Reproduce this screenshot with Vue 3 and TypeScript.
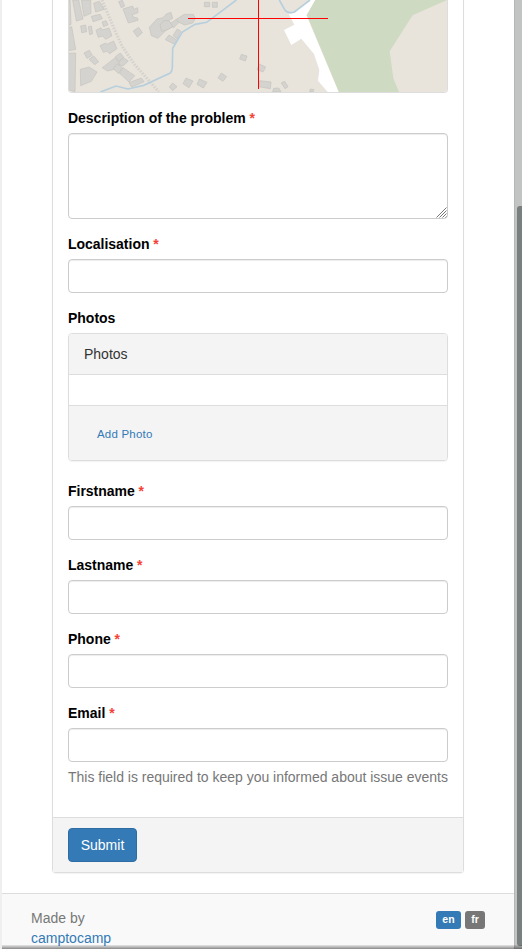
<script setup lang="ts">
interface Field {
  id: string
  label: string
  help?: string
}

const contactFields: Field[] = [
  { id: 'firstname', label: 'Firstname' },
  { id: 'lastname', label: 'Lastname' },
  { id: 'phone', label: 'Phone' },
  { id: 'email', label: 'Email', help: 'This field is required to keep you informed about issue events' },
]

// Building footprints, in thirds of a pixel
const buildings: string[] = [
  '49,0 54,0 57,73 50,76',
  '62,0 80,0 93,57 73,63',
  '88,0 116,0 117,40 96,49',
  '125,10 142,4 157,28 131,36',
  '118,49 144,43 151,56 123,65',
  '49,82 59,80 71,148 50,152',
  '86,78 101,75 104,95 89,98',
  '109,80 118,78 122,101 113,104',
  '150,66 162,62 168,74 155,80',
  '132,91 147,83 151,90 171,84 180,107 161,118 152,108 139,112',
  '144,137 161,129 165,133 185,123 195,146 173,161 165,154 154,157',
  '49,160 71,159 69,275 50,270',
  '96,159 112,151 121,166 105,175',
  '111,178 125,168 140,185 128,194',
  '85,208 111,201 135,216 118,244 86,257',
  '151,203 190,173 203,190 188,208 166,213',
  '190,170 205,159 215,172 200,184',
  '203,184 214,173 229,183 213,198 200,194',
  '184,206 195,191 211,203 200,221',
  '203,220 213,203 248,227 231,246',
  '231,248 268,234 276,245 239,261',
  '200,5 211,1 218,18 208,23',
  '213,27 242,18 246,28 257,23 258,38 241,44 243,51 257,54 258,61 229,69',
  '244,93 260,82 271,98 256,111',
  '292,82 315,57 333,53 343,42 357,37 362,55 350,62 364,79 342,91 318,115 298,107',
  '324,75 335,62 350,62 364,79 344,90 329,94',
  '356,70 373,58 381,67 365,83',
  '373,58 397,43 424,43 430,56 422,69 398,75 381,67',
  '340,119 351,105 375,121 366,132',
  '363,107 376,87 387,94 375,116',
  '457,7 473,7 473,20 457,20',
  '481,7 496,7 496,22 481,22',
  '568,163 585,168 580,183 563,177',
  '508,219 524,230 513,244 498,234',
  '402,234 423,243 411,263 393,251',
  '442,237 465,247 454,264 435,253',
  '362,249 375,260 362,272 352,261',
  '622,192 641,201 633,216 615,209',
  '623,242 657,246 655,266 620,260',
  '688,249 698,244 708,260 699,266',
  '665,265 680,264 687,275 662,275',
  '775,267 786,269 784,275 773,275',
]
</script>

<template>
  <div class="page">
    <main class="viewport">
      <form class="panel" @submit.prevent>
        <div class="panel-body">
          <div class="map">
            <svg width="378" height="92" viewBox="51 0 1134 276" preserveAspectRatio="none">
              <rect width="1250" height="280" fill="#e8e4dc" />
              <path d="M790 0 763 45 860 276H827L798 242 802 210 786 162 748 116 718 135 696 90 727 74 710 42 727 39 774 0Z" fill="#fff" />
              <path d="M790 0H1185L1082 46 1013 154 1024 235 1041 276H861L765 46Z" fill="#cedac1" />
              <path d="M150 0 188 90 211 140 248 194 320 275" fill="none" stroke="#d5d2cd" stroke-width="9" stroke-dasharray="5 4" />
              <g fill="#d4d3cf" stroke="#c4c3bd" stroke-width="2">
                <polygon v-for="points in buildings" :key="points" :points="points" />
              </g>
              <path d="M145 276 192 258 228 267 275 256 355 219Q361 214 361 202L362 145 391 96 429 73 464 67 553 0M682 0 698 29Q708 42 727 36L774 0" fill="none" stroke="#b7cfdd" stroke-width="5" />
              <path d="M408 55.5H828M619.5 0V267" fill="none" stroke="#f00" stroke-width="3" />
            </svg>
          </div>

          <div class="form-group">
            <label for="description">Description of the problem <span class="required">*</span></label>
            <div class="textarea-wrap">
              <textarea id="description" class="control"></textarea>
              <svg class="grip" width="11" height="11" viewBox="0 0 11 11">
                <path d="M.5 10.5 10.5 .5M3.5 10.5 10.5 3.5M6.5 10.5 10.5 6.5M9.5 10.5 10.5 9.5" fill="none" stroke="#777" stroke-width="1" />
              </svg>
            </div>
          </div>
          <div class="form-group">
            <label for="localisation">Localisation <span class="required">*</span></label>
            <input id="localisation" class="control" type="text" />
          </div>
          <div class="form-group">
            <label>Photos</label>
            <div class="photos">
              <div class="photos-heading">Photos</div>
              <div class="photos-list"></div>
              <div class="photos-footer"><a href="#">Add Photo</a></div>
            </div>
          </div>
          <div v-for="field in contactFields" :key="field.id" class="form-group">
            <label :for="field.id">{{ field.label }} <span class="required">*</span></label>
            <input :id="field.id" class="control" type="text" />
            <p v-if="field.help" class="help">{{ field.help }}</p>
          </div>
        </div>
        <div class="panel-footer"><button class="submit" type="submit">Submit</button></div>
      </form>

      <footer class="site-footer">
        <div class="credit">Made by<br /><a href="#">camptocamp</a></div>
        <nav class="languages">
          <a class="language active" href="#">en</a>
          <a class="language" href="#">fr</a>
        </nav>
      </footer>
    </main>
    <div class="scrollbar"><div class="thumb"></div></div>
    <div class="window-edge"></div>
  </div>
</template>

<style>
body {
  overflow: hidden;
}
</style>

<style scoped>
* {
  box-sizing: border-box;
}
.page {
  position: relative;
  display: flex;
  width: 522px;
  height: 949px;
  overflow: hidden;
  border-left: 2px solid #efefef;
  background: #fff;
  color: #333;
  font: 14px/20px "Liberation Sans", Arial, sans-serif;
}
a {
  color: #337ab7;
  text-decoration: none;
}
.viewport {
  width: 512px;
  height: 949px;
  overflow: hidden;
}
.panel {
  width: 412px;
  margin: 0 50px 20px;
  border: 1px solid #ddd;
  border-top: 0;
  border-radius: 0 0 4px 4px;
  box-shadow: 0 1px 1px rgba(0, 0, 0, 0.05);
}
.panel-body {
  padding: 0 15px 15px;
}
.map {
  height: 93px;
  margin-bottom: 15px;
  overflow: hidden;
  border: 1px solid #ddd;
  border-top: 0;
  border-radius: 0 0 4px 4px;
}
.map svg {
  display: block;
}
.form-group {
  margin-bottom: 15px;
}
label {
  display: block;
  margin-bottom: 5px;
  color: #000;
  font-weight: 700;
  letter-spacing: -0.02px;
}
.required {
  color: #f44336;
}
.control {
  display: block;
  width: 100%;
  height: 34px;
  padding: 6px 12px;
  border: 1px solid #ccc;
  border-radius: 4px;
  outline: 0;
  background: #fff;
  box-shadow: inset 0 1px 1px rgba(0, 0, 0, 0.075);
  font: inherit;
}
.textarea-wrap {
  position: relative;
}
textarea.control {
  height: 86px;
  resize: none;
}
.grip {
  position: absolute;
  right: 1px;
  bottom: 1px;
}
.photos {
  margin-bottom: 20px;
  overflow: hidden;
  border: 1px solid #ddd;
  border-radius: 4px;
  box-shadow: 0 1px 1px rgba(0, 0, 0, 0.05);
}
.photos-heading {
  height: 41px;
  padding: 10px 15px;
  border-bottom: 1px solid #ddd;
  background: #f4f4f4;
}
.photos-list {
  height: 30px;
}
.photos-footer {
  height: 55px;
  padding: 18px 28px;
  border-top: 1px solid #ddd;
  background: #f4f4f4;
  font-size: 11.5px;
  letter-spacing: 0.2px;
}
.help {
  margin: 5px 0 0;
  color: #777;
  letter-spacing: -0.01px;
  white-space: nowrap;
}
.panel-footer {
  height: 55px;
  padding: 10px 15px;
  border-top: 1px solid #ddd;
  background: #f4f4f4;
}
.submit {
  display: block;
  width: 69px;
  height: 34px;
  padding: 6px 0;
  border: 1px solid #2e6da4;
  border-radius: 4px;
  background: #337ab7;
  color: #fff;
  font: inherit;
}
.site-footer {
  display: flex;
  justify-content: space-between;
  height: 80px;
  padding: 14px 29px;
  border-top: 1px solid #ddd;
  background: #f9f9f9;
  color: #777;
}
.languages {
  display: flex;
  gap: 4px;
  padding-top: 3px;
}
.language {
  width: 20px;
  height: 18px;
  border-radius: 3px;
  background: #777;
  color: #fff;
  font-size: 10.5px;
  font-weight: 700;
  line-height: 17px;
  text-align: center;
}
.language.active {
  width: 25px;
  background: #337ab7;
}
.scrollbar {
  width: 8px;
  padding: 206px 0 0 2px;
  border-left: 1px solid #b5b7b7;
  background: #c2c4c3;
}
.thumb {
  height: 740px;
  border-radius: 3px 0 0 3px;
  background: #797e7f;
}
.window-edge {
  position: absolute;
  right: 0;
  bottom: 0;
  left: -2px;
  height: 4px;
  background: linear-gradient(rgba(0, 0, 0, 0.08), rgba(0, 0, 0, 0.45));
}
</style>
